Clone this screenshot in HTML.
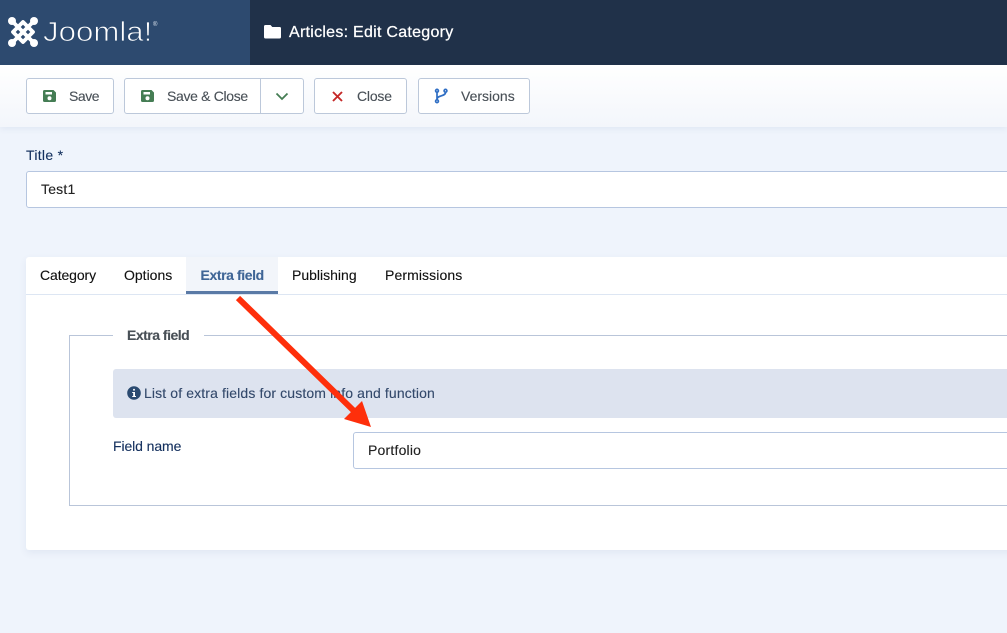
<!DOCTYPE html>
<html><head><meta charset="utf-8">
<style>
html,body{margin:0;padding:0;width:1007px;height:633px;overflow:hidden;background:#eff4fc;font-family:"Liberation Sans",sans-serif;font-size:14px}
*{box-sizing:border-box}
.a{position:absolute;white-space:nowrap}
.btn{position:absolute;top:78px;height:36px;background:#fff;border:1px solid #bcc8da;border-radius:3px}
.t{position:absolute;white-space:nowrap;line-height:20px;font-size:14px;-webkit-text-stroke:.12px currentColor}
.bt{color:#495057;top:86px}
.tab{top:265px;color:#111}
</style></head><body>
<div class="a" style="left:0;top:0;width:1007px;height:65px;background:#203149"></div>
<div class="a" style="left:0;top:0;width:250px;height:65px;background:#2d4a6f"></div>
<svg class="a" style="left:8px;top:16px" width="32" height="32" viewBox="0 0 32 32">
<g fill="none" stroke="#fff" stroke-width="3.800" stroke-linecap="round" stroke-linejoin="round">
<path d="M4 5L26 27"/><path d="M26 5L4 27"/>
<path d="M15 6L25 16L15 26L5 16Z"/>
</g>
<g fill="#fff"><circle cx="4" cy="5" r="4"/><circle cx="26" cy="5" r="4"/><circle cx="4" cy="27" r="4"/><circle cx="26" cy="27" r="4"/></g>
</svg>
<div class="a" style="left:43px;top:16px;font-size:28px;line-height:32px;color:#fff;transform-origin:0 50%;transform:scaleX(1.115);-webkit-text-stroke:.8px #2d4a6f">Joomla!</div>
<div class="a" style="left:153px;top:22px;font-size:6px;line-height:6px;color:#dfe6ef">®</div>
<svg class="a" style="left:264px;top:24px" width="17" height="15" viewBox="0 0 17 15"><path d="M1.500 1H6.500L8.300 3H15.500A1.300 1.300 0 0 1 17 4.300V13A1.500 1.500 0 0 1 15.500 14.500H1.500A1.500 1.500 0 0 1 0 13V2.500A1.500 1.500 0 0 1 1.500 1Z" fill="#fff"/></svg>
<div class="a" style="left:289px;top:23px;font-size:16px;line-height:20px;color:#fff;letter-spacing:.27px;-webkit-text-stroke:.25px #fff">Articles: Edit Category</div>

<div class="a" style="left:0;top:65px;width:1007px;height:62px;background:linear-gradient(#fff,#f3f6fb);box-shadow:0 2px 6px rgba(60,90,140,.08)"></div>

<div class="btn" style="left:26px;width:88px"></div>
<svg class="a" style="left:43px;top:89px" width="14" height="14" viewBox="0 0 14 14"><path fill-rule="evenodd" d="M1.500 1H10.500L13 3.500V11.500A1.500 1.500 0 0 1 11.500 13H1.500A1.500 1.500 0 0 1 0 11.500V2.500A1.500 1.500 0 0 1 1.500 1ZM2.500 3V5.500H9V3ZM6.500 7.200A2 2 0 1 0 6.500 11.200A2 2 0 1 0 6.500 7.200Z" fill="#457d54"/></svg>
<div class="t bt" style="left:69px;letter-spacing:-.45px">Save</div>

<div class="btn" style="left:124px;width:180px"></div>
<div class="a" style="left:260px;top:79px;width:1px;height:34px;background:#bcc8da"></div>
<svg class="a" style="left:141px;top:89px" width="14" height="14" viewBox="0 0 14 14"><path fill-rule="evenodd" d="M1.500 1H10.500L13 3.500V11.500A1.500 1.500 0 0 1 11.500 13H1.500A1.500 1.500 0 0 1 0 11.500V2.500A1.500 1.500 0 0 1 1.500 1ZM2.500 3V5.500H9V3ZM6.500 7.200A2 2 0 1 0 6.500 11.200A2 2 0 1 0 6.500 7.200Z" fill="#457d54"/></svg>
<div class="t bt" style="left:167px;letter-spacing:-.33px">Save &amp; Close</div>
<svg class="a" style="left:275px;top:92px" width="14" height="9" viewBox="0 0 14 9"><path d="M1.500 1.500L7 7L12.500 1.500" fill="none" stroke="#457d54" stroke-width="1.800"/></svg>

<div class="btn" style="left:314px;width:93px"></div>
<svg class="a" style="left:332px;top:91px" width="11" height="11" viewBox="0 0 11 11"><path d="M1 1L10 10M10 1L1 10" stroke="#c52827" stroke-width="1.900" fill="none"/></svg>
<div class="t bt" style="left:357px;letter-spacing:-.2px">Close</div>

<div class="btn" style="left:418px;width:112px"></div>
<svg class="a" style="left:434px;top:88px" width="14" height="16" viewBox="0 0 14 16"><g fill="none" stroke="#2f6ec4" stroke-width="1.700"><circle cx="3" cy="2.800" r="1.400"/><circle cx="3" cy="13.200" r="1.400"/><circle cx="11.500" cy="2.800" r="1.400"/><path d="M3 4.500V11.500M11.500 4.500C11.500 8.500 3.500 7 3 11"/></g></svg>
<div class="t bt" style="left:461px">Versions</div>

<div class="t" style="left:26px;top:145px;color:#14305e;letter-spacing:.3px">Title *</div>
<div class="a" style="left:26px;top:171px;width:990px;height:37px;background:#fff;border:1px solid #b6c6e0;border-radius:3px"></div>
<div class="t" style="left:41px;top:179px;color:#222;letter-spacing:.2px">Test1</div>

<div class="a" style="left:26px;top:257px;width:990px;height:293px;background:#fff;border-radius:3px;box-shadow:0 3px 8px rgba(60,90,140,.08)"></div>
<div class="a" style="left:26px;top:294px;width:990px;height:1px;background:#dde6f3"></div>
<div class="a" style="left:186px;top:257px;width:92px;height:37px;background:#f2f5fa;border-bottom:3px solid #5a7aa6"></div>
<div class="t tab" style="left:40px;letter-spacing:-.1px">Category</div>
<div class="t tab" style="left:124px">Options</div>
<div class="t tab" style="left:200.500px;color:#3f6596;font-weight:bold;letter-spacing:-.4px">Extra field</div>
<div class="t tab" style="left:292px">Publishing</div>
<div class="t tab" style="left:385px;letter-spacing:.1px">Permissions</div>

<div class="a" style="left:69px;top:335px;width:950px;height:171px;border:1px solid #b9c5d9"></div>
<div class="a" style="left:113px;top:330px;width:91px;height:12px;background:#fff"></div>
<div class="t" style="left:127px;top:325px;color:#495057;font-weight:bold;letter-spacing:-.5px">Extra field</div>

<div class="a" style="left:113px;top:369px;width:900px;height:49px;background:#dde3ef;border-radius:3px"></div>
<svg class="a" style="left:127px;top:386px" width="14" height="14" viewBox="0 0 14 14"><circle cx="7" cy="7" r="6.800" fill="#2a4a70"/><rect x="6" y="2.800" width="2" height="2" rx="1" fill="#fff"/><path d="M5.200 6H8V10H9V11H5.200V10H6.200V7H5.200Z" fill="#fff"/></svg>
<div class="t" style="left:144px;top:383px;color:#33496b;letter-spacing:.125px">List of extra fields for custom info and function</div>

<div class="t" style="left:113px;top:436px;color:#14305e;letter-spacing:-.1px">Field name</div>
<div class="a" style="left:353px;top:432px;width:660px;height:37px;background:#fff;border:1px solid #b6c6e0;border-radius:3px"></div>
<div class="t" style="left:368px;top:440px;color:#222;letter-spacing:.2px">Portfolio</div>

<svg class="a" style="left:0;top:0" width="1007" height="633" viewBox="0 0 1007 633">
<path d="M238 298L354 411" stroke="#fe2f0b" stroke-width="6" fill="none"/>
<path d="M371 427L344 419L362 401Z" fill="#fe2f0b"/>
</svg>
</body></html>
